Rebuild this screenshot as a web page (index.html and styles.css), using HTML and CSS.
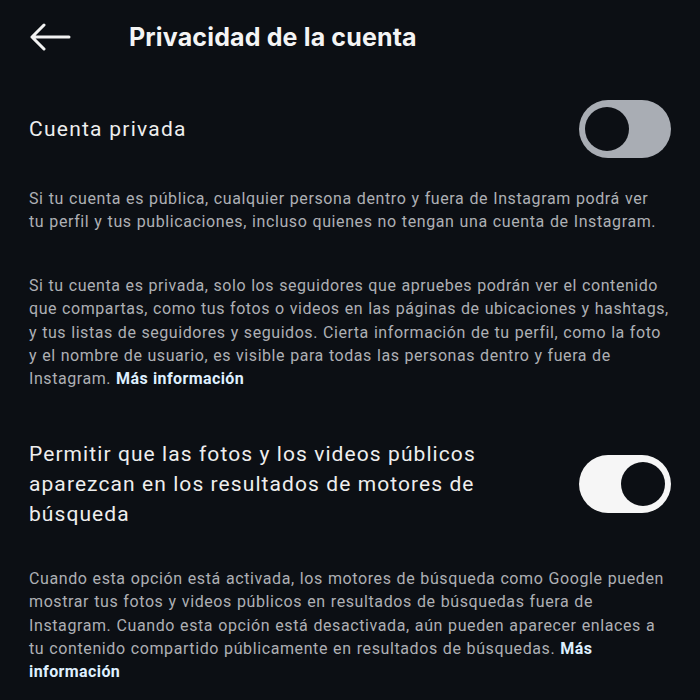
FILE: index.html
```html
<!DOCTYPE html>
<html lang="es">
<head>
<meta charset="utf-8">
<link rel="stylesheet" href="styles.css">
</head>
<body>
<div class="screen">
  <header class="topbar">
    <svg class="back" width="42" height="28" viewBox="0 0 42 28" aria-hidden="true">
      <path d="M40 14H3M15 2L3 14l12 12" fill="none" stroke="#f2f2f2" stroke-width="3" stroke-linecap="round" stroke-linejoin="round"/>
    </svg>
    <h1 class="title">Privacidad de la cuenta</h1>
  </header>

  <section class="setting first">
    <div class="row">
      <span class="label">Cuenta privada</span>
      <span class="toggle off"><span class="knob"></span></span>
    </div>
    <p class="desc">Si tu cuenta es pública, cualquier persona dentro y fuera de Instagram podrá ver tu perfil y tus publicaciones, incluso quienes no tengan una cuenta de Instagram.</p>
    <p class="desc wide">Si tu cuenta es privada, solo los seguidores que apruebes podrán ver el contenido que compartas, como tus fotos o videos en las páginas de ubicaciones y hashtags, y tus listas de seguidores y seguidos. Cierta información de tu perfil, como la foto y el nombre de usuario, es visible para todas las personas dentro y fuera de Instagram. <a class="link">Más información</a></p>
  </section>

  <section class="setting second">
    <div class="row">
      <span class="label multi">Permitir que las fotos y los videos públicos aparezcan en los resultados de motores de búsqueda</span>
      <span class="toggle on"><span class="knob"></span></span>
    </div>
    <p class="desc">Cuando esta opción está activada, los motores de búsqueda como Google pueden mostrar tus fotos y videos públicos en resultados de búsquedas fuera de Instagram. Cuando esta opción está desactivada, aún pueden aparecer enlaces a tu contenido compartido públicamente en resultados de búsquedas. <a class="link">Más información</a></p>
  </section>
</div>
</body>
</html>
```

FILE: styles.css
```css
html, body {
  margin: 0;
  padding: 0;
  background: #0c0f14;
}
.screen {
  width: 700px;
  height: 700px;
  overflow: hidden;
  background: #0c0f14;
  font-family: Roboto, "Liberation Sans", sans-serif;
  color: #f2f2f2;
  padding: 0 29px;
  box-sizing: border-box;
}
.topbar {
  display: flex;
  align-items: center;
  height: 74px;
}
.back {
  display: block;
  margin-right: 58px;
}
.title {
  margin: 0;
  font-family: Inter, "Liberation Sans", sans-serif;
  font-weight: 700;
  font-size: 25px;
  letter-spacing: 0.15px;
  color: #f4f4f4;
}
.setting.first {
  margin-top: 26px;
}
.row {
  display: flex;
  align-items: center;
  justify-content: space-between;
}
.label {
  font-size: 21px;
  color: #eeeeee;
  letter-spacing: 1.25px;
}
.label.multi {
  width: 490px;
  line-height: 30px;
  font-size: 21px;
  letter-spacing: 1.08px;
}
.toggle {
  width: 92px;
  height: 58px;
  border-radius: 29px;
  display: flex;
  align-items: center;
  box-sizing: border-box;
  padding: 0 6px;
  flex-shrink: 0;
}
.toggle.off {
  background: #a9adb4;
  justify-content: flex-start;
}
.toggle.on {
  background: #f6f6f6;
  justify-content: flex-end;
}
.knob {
  width: 44px;
  height: 44px;
  border-radius: 50%;
  background: #0c0f14;
}
.desc {
  margin: 0;
  padding-right: 7px;
  font-size: 16px;
  line-height: 23.4px;
  letter-spacing: 0.6px;
  word-spacing: 0.5px;
  color: #aeb0b4;
}
.desc.wide {
  padding-right: 0;
  margin-right: -2px;
  letter-spacing: 0.56px;
}
.first .desc:first-of-type {
  margin-top: 29px;
}
.first .desc + .desc {
  margin-top: 40px;
}
.second {
  margin-top: 48px;
}
.second .desc {
  margin-top: 38px;
}
.link {
  color: #dff0ff;
  font-weight: 700;
  letter-spacing: 0.4px;
}
```
